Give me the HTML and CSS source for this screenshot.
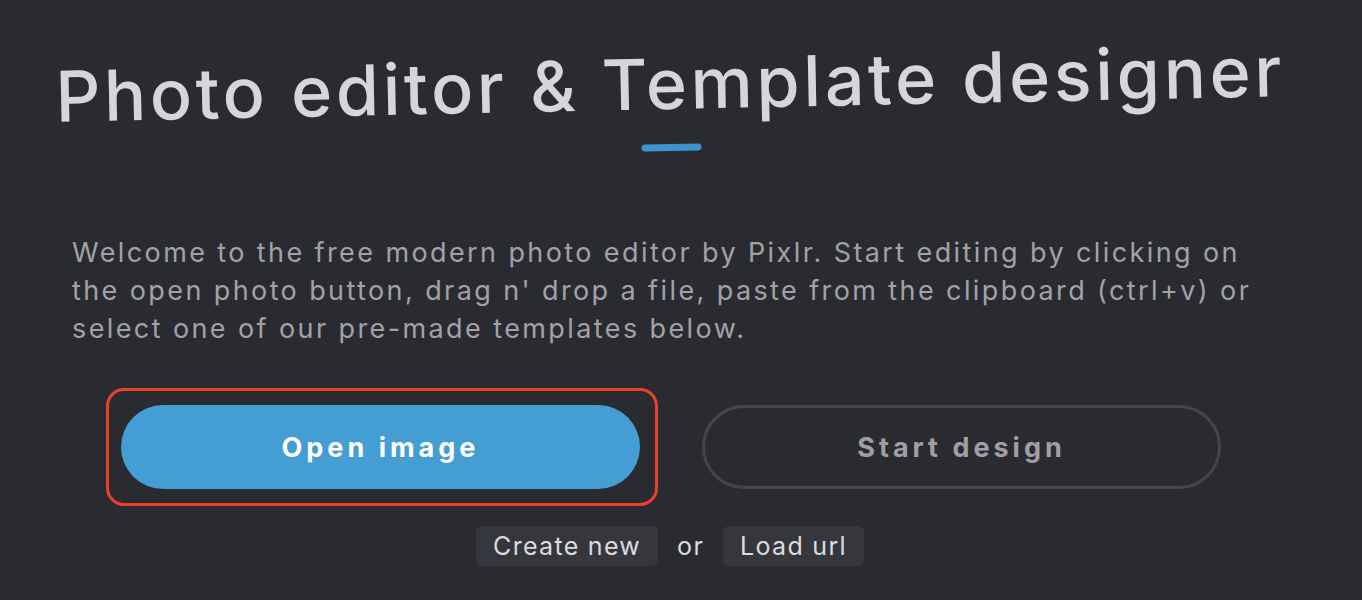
FILE: index.html
```html
<!DOCTYPE html>
<html lang="en">
<head>
<meta charset="utf-8">
<title>Pixlr - Photo editor</title>
<link rel="stylesheet" href="styles.css">
</head>
<body>
<main class="home">
  <header class="hero">
    <h1 class="hero-title">Photo editor &amp; Template designer</h1>
    <span class="hero-bar"></span>
  </header>
  <p class="intro">Welcome to the free modern photo editor by Pixlr. Start editing by clicking on<br>the open photo button, drag n' drop a file, paste from the clipboard (ctrl+v) or<br>select one of our pre-made templates below.</p>
  <div class="actions">
    <div class="highlight">
      <button class="btn btn-primary">Open image</button>
    </div>
    <button class="btn btn-outline">Start design</button>
  </div>
  <div class="minor">
    <button class="chip">Create new</button>
    <span class="or">or</span>
    <button class="chip">Load url</button>
  </div>
</main>
</body>
</html>
```

FILE: styles.css
```css
html, body {
  margin: 0;
  padding: 0;
  background: #2a2b30;
  height: 100%;
  overflow: hidden;
}

body {
  font-family: Inter, "Noto Sans", sans-serif;
  color: #d4d4d6;
}

.home {
  width: 1224px;
  margin-left: 58px;
  display: flex;
  flex-direction: column;
}

.hero {
  display: flex;
  flex-direction: column;
  align-items: center;
  padding-top: 42px;
  transform: rotate(-1.2deg);
  transform-origin: 50% 50%;
}

.hero-title {
  margin: 0;
  font-size: 70px;
  font-weight: 500;
  line-height: 84px;
  letter-spacing: 3.7px;
  color: #d6d6d8;
  white-space: nowrap;
}

.hero-bar {
  display: block;
  width: 60px;
  height: 7px;
  border-radius: 4px;
  background: #3d93cc;
  margin-top: 18px;
}

.intro {
  margin: 83px 0 0 14px;
  font-size: 27px;
  line-height: 38px;
  color: #a2a2a6;
  letter-spacing: 2.4px;
  white-space: nowrap;
}

.actions {
  display: flex;
  align-items: center;
  margin-top: 40px;
  margin-left: 48px;
  gap: 44px;
}

.highlight {
  border: 3px solid #e8412c;
  border-radius: 18px;
  padding: 14px 15px 14px 12px;
}

.btn {
  width: 519px;
  height: 84px;
  border-radius: 42px;
  font-family: Inter, "Noto Sans", sans-serif;
  font-size: 27px;
  font-weight: 700;
  letter-spacing: 4px;
  cursor: pointer;
  display: flex;
  align-items: center;
  justify-content: center;
}

.btn-primary {
  background: #459ed3;
  border: none;
  color: #ffffff;
}

.btn-outline {
  background: transparent;
  border: 3px solid #45464c;
  color: #a0a0a4;
}

.minor {
  display: flex;
  align-items: center;
  justify-content: center;
  gap: 19px;
  margin-top: 20px;
  margin-left: 0;
}

.chip {
  height: 40px;
  padding: 0 17px;
  border: none;
  border-radius: 6px;
  background: #36373d;
  color: #dcdcde;
  font-family: Inter, "Noto Sans", sans-serif;
  font-size: 25px;
  letter-spacing: 1.3px;
  cursor: pointer;
}

.or {
  font-size: 25px;
  color: #dcdcde;
  letter-spacing: 1.3px;
}
```
